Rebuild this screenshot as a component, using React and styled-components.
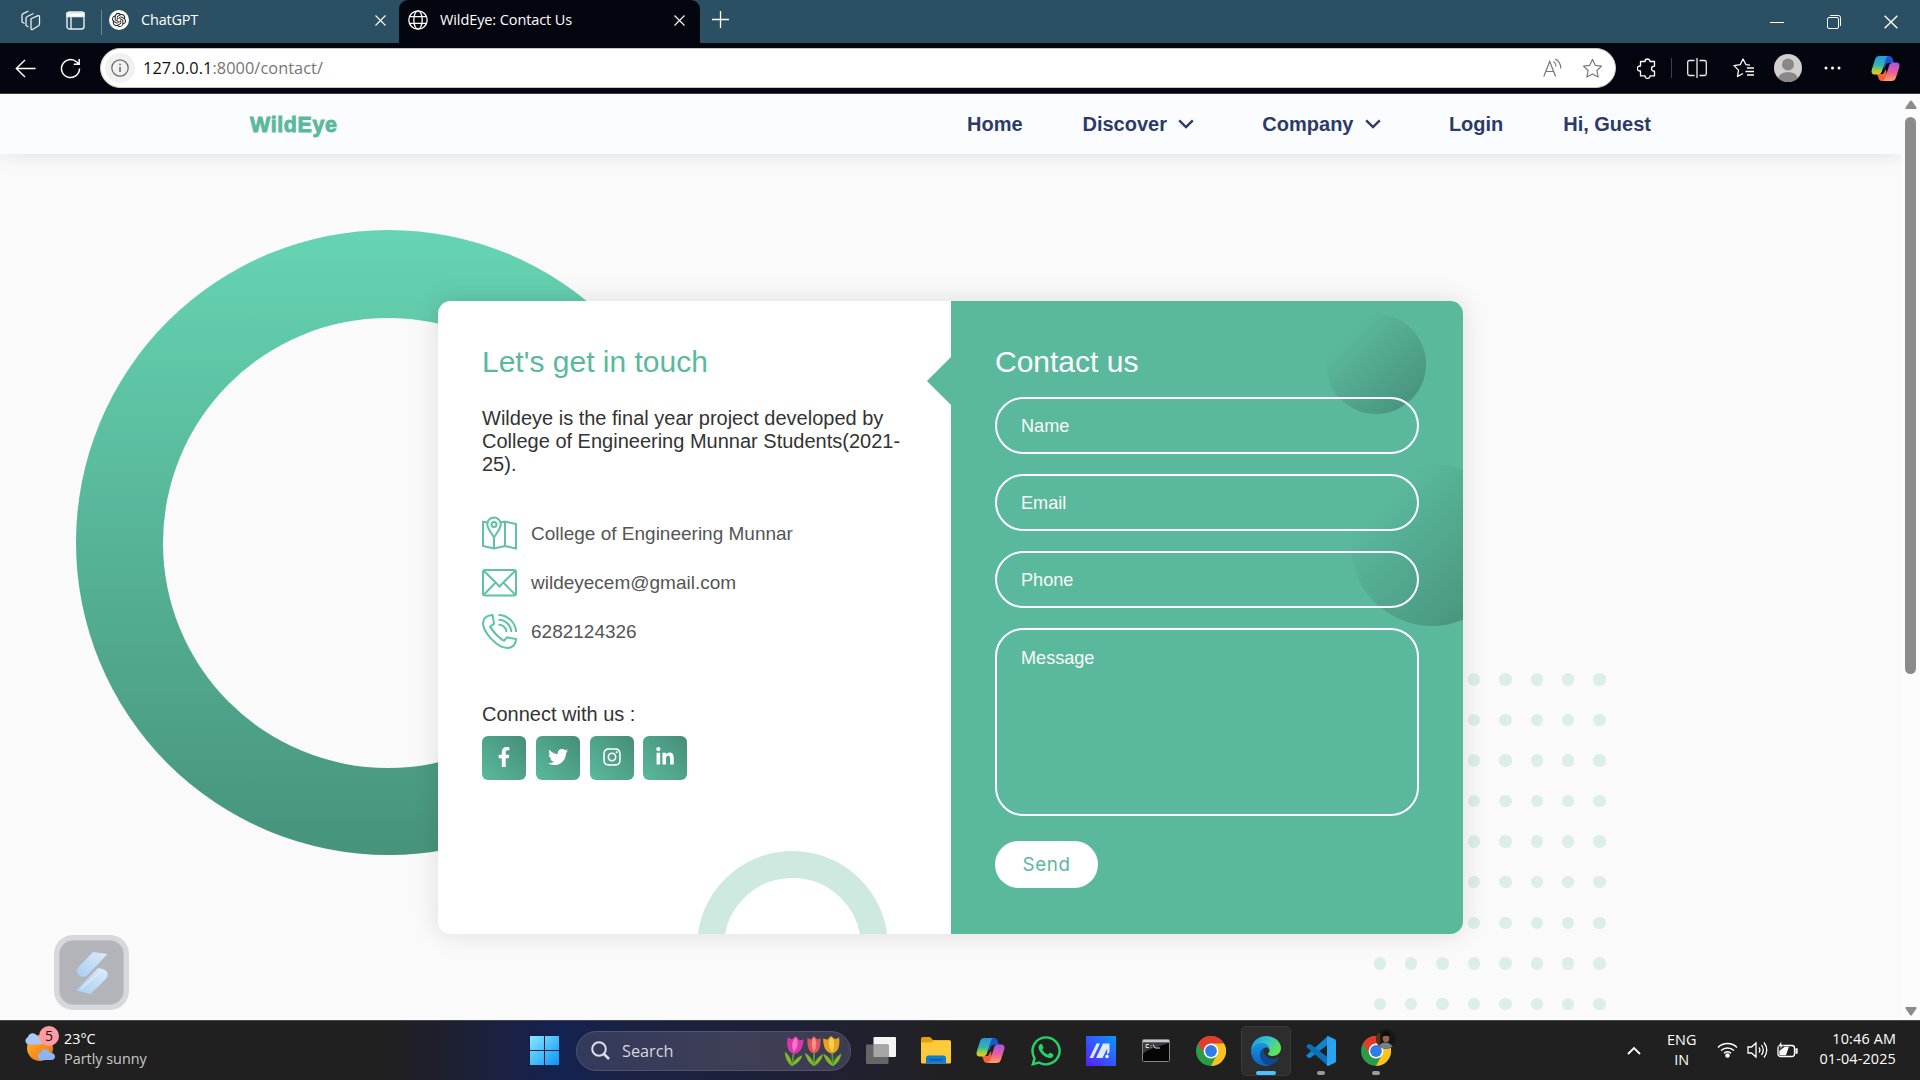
import React from "react";
import styled, { createGlobalStyle, css } from "styled-components";
import { FaFacebookF, FaTwitter, FaInstagram, FaLinkedinIn, FaWhatsapp } from "react-icons/fa";
import { SiOpenai } from "react-icons/si";

const green = "#5ab99d";
const uiFont = `"Open Sans", "Noto Sans", sans-serif`;
const pageFont = `"Liberation Sans", Arial, sans-serif`;

const GlobalStyle = createGlobalStyle`
  * { box-sizing: border-box; }
  html, body { margin: 0; padding: 0; background: #fafafa; }
  body { overflow: hidden; }
  h3, p { margin: 0; font-weight: 400; }
`;

const Screen = styled.div`
  width: 1920px;
  height: 1080px;
  display: flex;
  flex-direction: column;
  overflow: hidden;
`;

/* ---------- browser chrome ---------- */
const TabStrip = styled.div`
  height: 43px;
  flex: none;
  display: flex;
  align-items: stretch;
  background: #2b5063;
  color: #fff;
  font: 14.5px ${uiFont};
`;
const StripTools = styled.div`
  width: 101px;
  display: flex;
  align-items: center;
  padding: 0 0 2px 20px;
  gap: 24px;
  svg { display: block; }
`;
const StripDivider = styled.div`
  width: 1px;
  height: 25px;
  margin-top: 10px;
  background: #6b8694;
`;
const Tab = styled.div`
  display: flex;
  align-items: center;
  width: ${(p) => p.$w}px;
  padding: 0 ${(p) => p.$end}px 3px ${(p) => p.$pad}px;
  gap: 12px;
  ${(p) => p.$active && css`background: #03050f; border-radius: 9px 9px 0 0;`}
  svg { display: block; flex: none; }
`;
const TabTitle = styled.span`
  flex: 1;
  margin-top: -1px;
  white-space: nowrap;
  letter-spacing: ${(p) => p.$ls || 0}px;
`;
const Favicon = styled.span`
  width: 20px;
  height: 20px;
  border-radius: 50%;
  background: #fff;
  display: flex;
  align-items: center;
  justify-content: center;
  color: #111;
`;
const NewTab = styled.div`
  padding: 11px 0 0 12px;
  flex: 1;
`;
const WindowButtons = styled.div`
  display: flex;
  align-items: center;
  gap: 43px;
  padding-right: 22px;
`;
const Toolbar = styled.div`
  height: 51px;
  flex: none;
  display: flex;
  align-items: center;
  background: #03050f;
  border-bottom: 1px solid #3a3b42;
  color: #f3f3f3;
  svg { display: block; flex: none; }
`;
const ToolIcon = styled.div`
  width: ${(p) => p.$w}px;
  display: flex;
  justify-content: center;
`;
const AddressBar = styled.div`
  width: 1516px;
  height: 40px;
  border-radius: 20px;
  background: #fff;
  border: 1px solid #c9c4cc;
  display: flex;
  align-items: center;
  padding: 0 12px 0 4px;
  color: #757575;
  font: 16.3px ${uiFont};
`;
const InfoBadge = styled.div`
  width: 30px;
  height: 30px;
  border-radius: 50%;
  background: #f1f1f1;
  display: flex;
  align-items: center;
  justify-content: center;
  margin-right: 8px;
`;
const Url = styled.div`
  flex: 1;
  letter-spacing: 0.08px;
  b { font-weight: 400; color: #111; }
`;
const BarDivider = styled.div`
  width: 1px;
  height: 20px;
  background: #3d3f48;
`;

/* ---------- web page ---------- */
const Viewport = styled.div`
  height: 926px;
  flex: none;
  display: flex;
`;
const Page = styled.div`
  position: relative;
  width: 1901px;
  background: #fafafa;
  overflow: hidden;
  font-family: ${pageFont};
`;
const Nav = styled.nav`
  position: relative;
  z-index: 2;
  height: 60px;
  padding: 0 250px;
  background: #fbfcff;
  box-shadow: 0 0 19px rgba(8, 36, 60, 0.12);
  display: flex;
  align-items: center;
  justify-content: space-between;
`;
const Brand = styled.div`
  color: ${green};
  font-size: 21.4px;
  font-weight: 700;
  letter-spacing: 0.65px;
  padding-top: 2px;
  -webkit-text-stroke: 0.9px ${green};
`;
const NavLinks = styled.div`
  display: flex;
  gap: 59.9px;
`;
const NavLink = styled.div`
  display: flex;
  align-items: center;
  color: #2b3a67;
  font-size: 20px;
  font-weight: 700;
  svg { margin: 0 8px 0 11.5px; }
`;
const Main = styled.main`
  display: flex;
  padding: 147px 0 0 438px;
`;
const BigRing = styled.div`
  position: absolute;
  left: 75.6px;
  top: 136.2px;
  width: 625px;
  height: 625px;
  border-radius: 50%;
  background: linear-gradient(to bottom, #66d4b4, #47937d);
  display: flex;
  align-items: center;
  justify-content: center;
  &::after {
    content: "";
    width: 450px;
    height: 450px;
    border-radius: 50%;
    background: #fafafa;
  }
`;
const Dots = styled.div`
  position: absolute;
  left: 1373.6px;
  top: 579px;
  display: grid;
  grid-template-columns: repeat(8, 12.5px);
  column-gap: 18.9px;
  row-gap: 28.1px;
`;
const Dot = styled.i`
  width: 12.5px;
  height: 12.5px;
  border-radius: 50%;
  background: #dbeee7;
`;
const Card = styled.section`
  position: relative;
  width: 1025px;
  height: 633px;
  display: grid;
  grid-template-columns: 513px 512px;
  background: #fff;
  border-radius: 12.5px;
  box-shadow: 0 0 25px 1.25px rgba(0, 0, 0, 0.1);
  overflow: hidden;
`;
const InfoPane = styled.div`
  position: relative;
  padding: 46px 44px;
`;
const SmallRing = styled.div`
  position: absolute;
  left: 259px;
  top: 550px;
  width: 191px;
  height: 191px;
  border: 27.5px solid #cde9e0;
  border-radius: 50%;
`;
const Heading = styled.h3`
  font-size: 30px;
  line-height: 30px;
  color: ${(p) => p.$color};
  margin-bottom: ${(p) => p.$gap}px;
`;
const Intro = styled.p`
  font-size: 20px;
  line-height: 23px;
  color: #333;
  margin-bottom: 40px;
`;
const InfoRow = styled.div`
  display: flex;
  align-items: center;
  gap: 14px;
  height: 35px;
  margin-bottom: 14px;
  color: #555;
  font-size: 19px;
  svg { display: block; }
`;
const SocialLabel = styled.p`
  margin-top: 54px;
  font-size: 20px;
  line-height: 23px;
  color: #333;
`;
const SocialRow = styled.div`
  display: flex;
  gap: 9.8px;
  margin-top: 10px;
`;
const SocialIcon = styled.div`
  width: 44px;
  height: 44px;
  border-radius: 6px;
  background: linear-gradient(45deg, ${green}, #458d78);
  color: #fff;
  font-size: 20px;
  display: flex;
  align-items: center;
  justify-content: center;
  padding-bottom: 2px;
`;
const FormPane = styled.div`
  position: relative;
  background: ${green};
  padding: 46px 44px;
  &::before {
    content: "";
    position: absolute;
    left: -17px;
    top: 62.5px;
    width: 34px;
    height: 34px;
    background: ${green};
    transform: rotate(45deg);
  }
`;
const Bubble = styled.div`
  position: absolute;
  top: ${(p) => p.$top}px;
  right: ${(p) => p.$right}px;
  width: ${(p) => p.$size}px;
  height: ${(p) => p.$size}px;
  border-radius: 50%;
  background: linear-gradient(135deg, transparent 20%, #458d78);
`;
const Form = styled.form`
  position: relative;
  display: flex;
  flex-direction: column;
  align-items: flex-start;
`;
const field = css`
  display: block;
  width: 424px;
  margin: 0 0 20px;
  padding: 2px 24px 0;
  border: 2px solid #fff;
  border-radius: 28.5px;
  background: none;
  outline: none;
  resize: none;
  color: #fff;
  font: 18.1px ${pageFont};
  &::placeholder { color: #fafafa; opacity: 1; }
`;
const Input = styled.input`
  ${field}
  height: 57px;
`;
const Textarea = styled.textarea`
  ${field}
  height: 188px;
  padding-top: 18px;
  margin-bottom: 25px;
`;
const Send = styled.button`
  width: 103px;
  height: 47px;
  padding: 0;
  border: 0;
  border-radius: 23.5px;
  background: #fff;
  color: ${green};
  font: 18.8px Inter, sans-serif;
  letter-spacing: 0.6px;
`;
const Widget = styled.div`
  position: absolute;
  left: 54px;
  top: 841px;
  width: 75px;
  height: 75px;
  border-radius: 19px;
  background: #d7d8dc;
  padding: 5px;
`;
const WidgetFace = styled.div`
  width: 65px;
  height: 65px;
  border-radius: 14px;
  background: #b3b4b9;
  border: 1px solid #c1c2c7;
  display: flex;
  align-items: center;
  justify-content: center;
`;
const Scrollbar = styled.div`
  width: 19px;
  background: #fcfcfd;
  display: flex;
  flex-direction: column;
  align-items: center;
  padding: 6px 0 4px 0;
  svg { display: block; flex: none; }
`;
const ThumbTrack = styled.div`
  flex: 1;
  padding-top: 8px;
`;
const Thumb = styled.div`
  width: 11px;
  height: 557px;
  border-radius: 6px;
  background: #8b8b8b;
`;

/* ---------- taskbar ---------- */
const Taskbar = styled.div`
  height: 60px;
  flex: none;
  display: flex;
  align-items: center;
  border-top: 1px solid #45484a;
  background: linear-gradient(90deg, #202020 0 380px, #1f1f2b 430px, #1b2140 500px, #142251 560px, #1b2141 640px, #1e2038 780px, #202130 850px, #212126 920px, #202020 980px);
  color: #fff;
  font: 14.4px/20px ${uiFont};
  svg { display: block; flex: none; }
`;
const Weather = styled.div`
  width: 517px;
  padding-left: 24px;
  display: flex;
  gap: 8px;
`;
const WeatherIcon = styled.div`
  position: relative;
  width: 32px;
  height: 40px;
`;
const Badge = styled.span`
  position: absolute;
  left: 15px;
  top: -3px;
  width: 20px;
  height: 20px;
  border-radius: 50%;
  background: #ff99a4;
  color: #111;
  font-size: 14px;
  text-align: center;
`;
const Stack = styled.div`
  display: flex;
  flex-direction: column;
  text-align: ${(p) => p.$align || "left"};
  white-space: nowrap;
  letter-spacing: ${(p) => p.$ls || 0}px;
  margin-bottom: ${(p) => p.$lift || 0}px;
`;
const Muted = styled.span`
  color: #c9c9c9;
`;
const Slot = styled.div`
  width: 55px;
  height: 50px;
  position: relative;
  display: flex;
  align-items: center;
  justify-content: center;
`;
const ActiveTile = styled.div`
  width: 50px;
  height: 50px;
  border-radius: 5px;
  background: #2d2d2d;
  border: 1px solid #393939;
  display: flex;
  align-items: center;
  justify-content: center;
`;
const Underline = styled.span`
  position: absolute;
  bottom: 1px;
  left: 50%;
  transform: translateX(-50%);
  width: ${(p) => p.$w}px;
  height: 4px;
  border-radius: 2px;
  background: ${(p) => p.$c};
`;
const SearchBox = styled.div`
  width: 275px;
  height: 40px;
  margin: 0 2px 0 4px;
  border-radius: 20px;
  background: linear-gradient(90deg, #343a5c, #3e3f56 60%, #3c3d50);
  border: 1px solid #50546e;
  display: flex;
  align-items: center;
  padding: 0 8px 0 14px;
  color: #d5d6df;
  font-size: 16.3px;
`;
const SearchText = styled.span`
  flex: 1;
  padding: 0 0 0 12px;
`;
const Photo = styled.span`
  position: absolute;
  left: 28px;
  top: 3px;
  width: 20px;
  height: 20px;
  border-radius: 50%;
  overflow: hidden;
`;
const Tray = styled.div`
  flex: 1;
  display: flex;
  justify-content: flex-end;
  align-items: center;
  padding-right: 24px;
`;
const TrayIcons = styled.div`
  display: flex;
  gap: 9px;
  margin: 0 21px 2px 21px;
  width: 81px;
`;

const Cross = ({ s = 11 }) => (
  <svg width={s} height={s} viewBox="0 0 11 11" stroke="#fff" strokeWidth="1.1"><path d="M.5.5l10 10M10.5.5l-10 10" /></svg>
);
const Chevron = () => (
  <svg width="16" height="10" viewBox="0 0 16 10" fill="none" stroke="#2b3a67" strokeWidth="2.4"><path d="M1.2 1.3L8 8l6.8-6.7" /></svg>
);
const MapIcon = () => (
  <svg width="35" height="35" viewBox="0 0 35 35" fill="none" stroke="#5fc2a5" strokeWidth="2">
    <path d="M5.3 6.6L1 5.7V30l11 2.5 11-2.5 11 2.5V8L23 5.6l-4.5.9M12 21v11.5M23 5.6V30" />
    <path d="M12 21.5C9 16.5 5.3 12.500 5.300 8.200a6.700 6.700 0 0 1 13.400 0C18.700 12.500 15 16.500 12 21.500z" />
    <circle cx="12" cy="8.500" r="2.500" />
  </svg>
);
const MailIcon = () => (
  <svg width="35" height="35" viewBox="0 0 35 35" fill="none" stroke="#5fc2a5" strokeWidth="2">
    <rect x="1" y="5" width="33" height="25.500" rx="2" />
    <path d="M2 6l11.700 11.500 3.800 4 3.800-4L33 6M2 29.500l11.700-12M33 29.500l-11.700-12" />
  </svg>
);
const PhoneIcon = () => (
  <svg width="35" height="35" viewBox="0 0 35 35" fill="none" stroke="#5fc2a5" strokeWidth="2">
    <path d="M10.500 1C5 1 1 4.500 1 9c0 9 14 25 24.500 25 5 0 8.500-3.500 8.500-9l-9-1.700-3 3.400c-4-2-12-10-13.800-14.200L12 9.700z" />
    <path d="M16.500 1C26 1 34 9 34 18M16.500 5.700C23.500 5.700 29.300 11.500 29.300 18M16.500 10.400c4.300 0 7.900 3.500 7.900 7.600" />
  </svg>
);
const Copilot = ({ id }) => (
  <svg width="29" height="27" viewBox="0 0 29 27">
    <defs>
      <linearGradient id={id + "a"} x1="0" y1="0" x2="0" y2="1"><stop offset="0" stopColor="#2795e8" /><stop offset=".5" stopColor="#35b6a8" /><stop offset=".8" stopColor="#a9cf3f" /><stop offset="1" stopColor="#f5c518" /></linearGradient>
      <linearGradient id={id + "b"} x1="0" y1="0" x2="0" y2="1"><stop offset="0" stopColor="#a855e8" /><stop offset=".5" stopColor="#e85a9c" /><stop offset="1" stopColor="#ffa05c" /></linearGradient>
    </defs>
    <path d="M8 1h10c2.500 0 3.200 1.500 3.800 3.500L23 8h-5c-2 0-3 1-3.700 3L13 14z" fill="#1c55c8" />
    <path d="M6 19h6l3-5 1 8-3 4h-2c-2.300 0-3-1.500-3.500-3z" fill="#f2603c" />
    <path d="M8.500 1H18c-2 0-2.800 1.700-3.400 3.800l-3.500 11C10.400 18.300 9 19.500 6.500 19.500H4c-3 0-4-2-3.200-5L4 4.500C4.800 2 6 1 8.500 1z" fill={`url(#${id}a)`} />
    <path d="M20.500 26H11c2 0 2.800-1.700 3.400-3.800l3.500-11c.7-2.500 2.100-3.700 4.600-3.700H25c3 0 4 2 3.200 5L25 22.500c-.8 2.500-2 3.500-4.500 3.500z" fill={`url(#${id}b)`} />
  </svg>
);
const Chrome = () => (
  <svg width="30" height="30" viewBox="0 0 30 30">
    <circle cx="15" cy="15" r="15" fill="#2a9c48" />
    <path d="M2 7.500A15 15 0 0 1 28 7.500L15 8.500 9 19z" fill="#e33b2e" />
    <path d="M28 7.500A15 15 0 0 1 15 30l6-11.500L15 7.500z" fill="#fcc31e" />
    <circle cx="15" cy="15" r="7.400" fill="#fff" /><circle cx="15" cy="15" r="5.900" fill="#2f7de9" />
  </svg>
);
const Edge = () => (
  <svg width="30" height="30" viewBox="0 0 30 30">
    <defs>
      <linearGradient id="edgeTop" x1="0" y1="0" x2="1" y2=".5"><stop offset="0" stopColor="#1b93de" /><stop offset=".5" stopColor="#35c1d0" /><stop offset="1" stopColor="#62e356" /></linearGradient>
      <linearGradient id="edgeSide" x1="0" y1="0" x2="0" y2="1"><stop offset="0" stopColor="#1993dc" /><stop offset="1" stopColor="#1062bb" /></linearGradient>
    </defs>
    <path d="M0 14C1 5.500 7 0 15 0c8.500 0 15 5.500 15 12 0 4.800-3.800 8-8.500 8-3 0-4.800-1-4.500-2.200.2-.8 1.500-1.300 1.500-3.600C18.500 11 15 8.500 11 8.500 6 8.500 2 11 0 14z" fill="url(#edgeTop)" />
    <path d="M0 15c1-4.500 5.500-8 10.500-8 5 0 8 3 8 7-1.200-2.200-3-3-5-2-3 1.500-4.500 5-3 9 1.500 4.500 5.500 7.500 9.500 7.500-1.500.8-3.500 1.500-5 1.500C6.500 30 0 23.500 0 15z" fill="url(#edgeSide)" />
    <path d="M13.500 12c-4 1.500-5.500 5.500-4 10 1.500 5 6.500 8 11 6.500 3-1 5.500-3 7-5.500.5-.9-.3-1.300-1-.9-3 1.400-7 1.200-9.800-.6-3.700-2.300-4.700-6.300-3.200-9.500z" fill="#0c4a93" />
  </svg>
);
const Tulip = ({ x, tilt, w, light, dark }) => (
  <g transform={`translate(${x} 0) rotate(${tilt} 8 30)`}>
    <path d="M8 15v16" stroke="#4c9a2a" strokeWidth="2" />
    <path d="M8 31C3 29 0 23-1 18c4 2 8 6 9 13zM8 31c4-2 8-6 9-12-5 3-8 6-9 12z" fill="#7fb52f" />
    <g transform={`translate(8 0) scale(${w} 1) translate(-8 0)`}>
      <path d="M0 3l4 1.500L8 1l4 3.500L16 3c.5 7-1 14.500-8 15.500C1 17.500-.5 10 0 3z" fill={dark} />
      <path d="M8 2c3.500 3.500 3.500 10 0 15C4.500 12 4.500 5.500 8 2z" fill={light} />
    </g>
  </g>
);
const stripPaths = "M4 13.500L1.500 12V5.500C1.500 4.500 2 4 2.700 3.600L8 1M8 17l-2.500-1.500V8.500c0-1 .5-1.600 1.300-2L13 3.500M11 8.500l6.500-2.800c1-.4 1.500 0 1.500 1V14c0 1-.5 1.600-1.300 2L12 19.500c-1 .5-1.500 0-1.500-1V9.500c0-.6.1-.8.5-1z";

const navItems = [["Home"], ["Discover", true], ["Company", true], ["Login"], ["Hi, Guest"]];
const contactRows = [
  [MapIcon, "College of Engineering Munnar"],
  [MailIcon, "wildeyecem@gmail.com"],
  [PhoneIcon, "6282124326"],
];
const socials = [FaFacebookF, FaTwitter, FaInstagram, FaLinkedinIn];

function BrowserTop() {
  return (
    <>
      <TabStrip>
        <StripTools>
          <svg width="22" height="21" viewBox="0 0 21 21" fill="none" stroke="#e9eff2" strokeWidth="1.300" strokeLinejoin="round"><path d={stripPaths} /></svg>
          <svg width="19" height="19" viewBox="0 0 19 19" fill="none" stroke="#e8eef1" strokeWidth="1.400"><rect x="1" y="1" width="17" height="17" rx="2.500" /><path d="M1 2h17v3.500H1z" fill="#fff" /><path d="M5 5v13" /></svg>
        </StripTools>
        <StripDivider />
        <Tab $w={297} $pad={7} $end={13}>
          <Favicon><SiOpenai size={14} /></Favicon>
          <TabTitle $ls={-0.2}>ChatGPT</TabTitle>
          <Cross />
        </Tab>
        <Tab $w={301} $pad={9} $end={15} $active>
          <svg width="20" height="20" viewBox="0 0 20 20" fill="none" stroke="#fff" strokeWidth="1.300"><circle cx="10" cy="10" r="9.200" /><ellipse cx="10" cy="10" rx="4.200" ry="9.200" /><path d="M1.500 6.700h17M1.500 13.300h17" /></svg>
          <TabTitle $ls={-0.1}>WildEye: Contact Us</TabTitle>
          <Cross />
        </Tab>
        <NewTab><svg width="17" height="17" viewBox="0 0 17 17" stroke="#fff" strokeWidth="1.300"><path d="M8.500 0v17M0 8.500h17" /></svg></NewTab>
        <WindowButtons>
          <svg width="14" height="14" stroke="#fff"><path d="M0 7.500h14" /></svg>
          <svg width="14" height="14" fill="none" stroke="#fff"><rect x=".5" y="2.500" width="11" height="11" rx="1.500" /><path d="M3 .5h8.500a2 2 0 0 1 2 2V11" /></svg>
          <Cross s={14} />
        </WindowButtons>
      </TabStrip>
      <Toolbar>
        <ToolIcon $w={50}><svg width="21" height="19" viewBox="0 0 21 19" fill="none" stroke="#fff" strokeWidth="1.400"><path d="M20.500 9.500H1.500M10 1L1.300 9.500 10 18" /></svg></ToolIcon>
        <ToolIcon $w={40}><svg width="21" height="21" viewBox="0 0 21 21" fill="none" stroke="#fff" strokeWidth="1.500"><path d="M19.500 10.500a9 9 0 1 1-3-6.700l2.500 2.400M19.200 1v5.300h-5.500" /></svg></ToolIcon>
        <ToolIcon $w={10} />
        <AddressBar>
          <InfoBadge><svg width="18" height="18" viewBox="0 0 18 18" fill="none" stroke="#666" strokeWidth="1.200"><circle cx="9" cy="9" r="8.200" /><path d="M9 8v5M9 4.800v1.500" strokeWidth="1.500" /></svg></InfoBadge>
          <Url><b>127.0.0.1</b>:8000/contact/</Url>
          <svg width="20" height="20" viewBox="0 0 20 20" fill="none" stroke="#777" strokeWidth="1.200"><path d="M.8 18.500L6.700 3.500l5.900 15M3 13.500h7.500M10.500 3.500c1.500 1 2.500 2.500 2.500 5M12 1c3.500 1.500 5.800 5 5.800 9.500" /></svg>
          <ToolIcon $w={19} />
          <svg width="21" height="21" viewBox="0 0 21 21" fill="none" stroke="#777" strokeWidth="1.200" strokeLinejoin="round"><path d="M10.500 1.500l2.800 5.800 6.200.8-4.600 4.400 1.200 6.500-5.600-3.100L4.900 19l1.200-6.500L1.500 8.100l6.200-.8z" /></svg>
        </AddressBar>
        <ToolIcon $w={6} />
        <ToolIcon $w={49}><svg width="20" height="21" viewBox="0 0 20 21" fill="none" stroke="#fff" strokeWidth="1.300" strokeLinejoin="round"><path d="M3.500 3.500H8a2.500 2.500 0 1 1 5 0h4.500v4.700c-4 0-4 5 0 5v4.700H13a2.500 2.500 0 1 1-5 0H3.500v-5a2.500 2.500 0 1 1 0-4.800z" /></svg></ToolIcon>
        <BarDivider />
        <ToolIcon $w={50}><svg width="20" height="20" viewBox="0 0 20 20" fill="none" stroke="#eee" strokeWidth="1.300"><path d="M7.500 2.500h-5a1.800 1.800 0 0 0-1.800 1.800v11.400a1.800 1.800 0 0 0 1.800 1.800h5M12.500 2.500h5a1.800 1.800 0 0 1 1.800 1.800v11.400a1.800 1.800 0 0 1-1.800 1.800h-5M10 0v20" /></svg></ToolIcon>
        <ToolIcon $w={42}><svg width="21" height="20" viewBox="0 0 21 20" fill="none" stroke="#fff" strokeWidth="1.300" strokeLinejoin="round"><path d="M17 7.200l-4-.5L10 1 7.200 6.700 1 7.600l4.500 4.500-1 6.400 5.500-3M14 10h7M12.500 13.500H21M14 17h7" /></svg></ToolIcon>
        <ToolIcon $w={47}><svg width="28" height="28" viewBox="0 0 28 28"><clipPath id="person"><circle cx="14" cy="14" r="14" /></clipPath><circle cx="14" cy="14" r="14" fill="#d2d0ce" /><g clipPath="url(#person)" fill="#8a8886"><circle cx="14" cy="10.500" r="6" /><ellipse cx="14" cy="25" rx="10" ry="7" /></g></svg></ToolIcon>
        <ToolIcon $w={43}><svg width="17" height="4" fill="#fff"><circle cx="2" cy="2" r="1.500" /><circle cx="8.500" cy="2" r="1.500" /><circle cx="15" cy="2" r="1.500" /></svg></ToolIcon>
        <ToolIcon $w={62}><Copilot id="cpTop" /></ToolIcon>
      </Toolbar>
    </>
  );
}

function ContactPage() {
  return (
    <Viewport>
      <Page>
        <BigRing />
        <Dots>{Array.from({ length: 72 }, (_, i) => <Dot key={i} />)}</Dots>
        <Nav>
          <Brand>WildEye</Brand>
          <NavLinks>
            {navItems.map(([label, menu]) => <NavLink key={label}>{label}{menu && <Chevron />}</NavLink>)}
          </NavLinks>
        </Nav>
        <Main>
          <Card>
            <InfoPane>
              <SmallRing />
              <Heading $color={green} $gap={30}>Let's get in touch</Heading>
              <Intro>Wildeye is the final year project developed by College of Engineering Munnar Students(2021-25).</Intro>
              {contactRows.map(([Icon, text]) => <InfoRow key={text}><Icon />{text}</InfoRow>)}
              <SocialLabel>Connect with us :</SocialLabel>
              <SocialRow>{socials.map((Icon, i) => <SocialIcon key={i}><Icon /></SocialIcon>)}</SocialRow>
            </InfoPane>
            <FormPane>
              <Bubble $top={162.5} $right={-50} $size={162.5} />
              <Bubble $top={13} $right={37} $size={100} />
              <Form>
                <Heading $color="#fff" $gap={20}>Contact us</Heading>
                <Input placeholder="Name" />
                <Input placeholder="Email" />
                <Input placeholder="Phone" />
                <Textarea placeholder="Message" />
                <Send type="button">Send</Send>
              </Form>
            </FormPane>
          </Card>
        </Main>
        <Widget>
          <WidgetFace>
            <svg width="32" height="42" viewBox="0 0 32 42">
              <defs><linearGradient id="blade" x1="0" y1="1" x2="1" y2="0"><stop offset="0" stopColor="#a9cdf3" /><stop offset="1" stopColor="#dcebf8" /></linearGradient></defs>
              <path d="M17 0l14.500 2L11.500 23c-2 2-5 2.200-7.500.8C.5 21.500 0 17.500 3 14.500z" fill="url(#blade)" />
              <path d="M0 38.500L22 16c4 .8 7 1.500 8.800 3.300 1.500 2.500 1 5.500-1.300 8L14.500 42z" fill="url(#blade)" />
              <path d="M5 37L27 17.500" stroke="#e5f0fa" strokeWidth="1.500" opacity=".7" />
            </svg>
          </WidgetFace>
        </Widget>
      </Page>
      <Scrollbar>
        <svg width="12" height="9" fill="#8b8b8b"><path d="M6 .500Q6.700.500 7 1l4.500 6.500Q12 9 11 9H1Q0 9 .500 7.500L5 1q.300-.500 1-.500z" /></svg>
        <ThumbTrack><Thumb /></ThumbTrack>
        <svg width="12" height="10" fill="#8b8b8b"><path d="M6 9.500Q6.700 9.500 7 9l4.500-6.500Q12 1 11 1H1Q0 1 .500 2.500L5 9q.300.500 1 .500z" /></svg>
      </Scrollbar>
    </Viewport>
  );
}

function WindowsTaskbar() {
  return (
    <Taskbar>
      <Weather>
        <WeatherIcon>
          <svg width="32" height="40" viewBox="0 0 32 40">
            <defs><linearGradient id="sun" x1="0" y1="0" x2="1" y2="1"><stop offset="0" stopColor="#ffb92e" /><stop offset="1" stopColor="#ef6a10" /></linearGradient></defs>
            <circle cx="16" cy="19" r="13" fill="url(#sun)" />
            <path d="M4 15.500a4 4 0 0 1 0-7.500c1-5 8-5 9.500 0 3 0 5 2 5 4s-1 3.500-3 3.500z" fill="#a9c8f7" />
            <path d="M16.500 31a3.700 3.700 0 0 1 .5-7.300c1-4.500 7.500-4.500 8.700 0 3.300 0 5.300 1.500 5.300 3.800 0 2-1.500 3.500-3.500 3.500z" fill="#8db4f5" />
          </svg>
          <Badge>5</Badge>
        </WeatherIcon>
        <Stack $lift={3}><span>23°C</span><Muted>Partly sunny</Muted></Stack>
      </Weather>
      <Slot>
        <svg width="29" height="29" viewBox="0 0 29 29"><defs><linearGradient id="win" gradientUnits="userSpaceOnUse" x1="0" y1="0" x2="29" y2="29"><stop offset="0" stopColor="#86eaff" /><stop offset="1" stopColor="#0c93f5" /></linearGradient></defs><path fill="url(#win)" d="M0 0h14v14H0zM15 0h14v14H15zM0 15h14v14H0zM15 15h14v14H15z" /></svg>
      </Slot>
      <SearchBox>
        <svg width="19" height="19" viewBox="0 0 19 19" fill="none" stroke="#dfe0e8" strokeWidth="2"><circle cx="8" cy="8" r="6.800" /><path d="M13 13l5 5" strokeWidth="2.500" /></svg>
        <SearchText>Search</SearchText>
        <svg width="60" height="32" viewBox="0 0 60 32">
          <Tulip x={2} tilt={8} w={1} light="#ff6fd0" dark="#d23aa8" />
          <Tulip x={24} tilt={0} w={0.82} light="#ff8f86" dark="#dc5560" />
          <Tulip x={43} tilt={-4} w={1} light="#ffcf55" dark="#e9a41f" />
        </svg>
      </SearchBox>
      <Slot><svg width="30" height="27"><rect x="7.500" y="0" width="22.500" height="20" rx="1" fill="#f4f4f4" /><rect x="0" y="7.500" width="22.500" height="19.500" rx="1" fill="#666" /><rect x="7.500" y="7.500" width="15" height="12.500" fill="#a6a6a6" /></svg></Slot>
      <Slot><svg width="30" height="27"><path d="M0 2Q0 0 2 0h7l3 3h16q2 0 2 2v5H0z" fill="#e6a107" /><path d="M0 5.500h10L13 3.500h15.500q1.500 0 1.500 1.500v20q0 1.500-1.500 1.500h-27Q0 26.500 0 25z" fill="#ffca3a" /><path d="M5 26.500V21q0-2.500 2.500-2.500h15Q25 18.500 25 21v5.500z" fill="#0f7bd2" /><path d="M8.500 22.700h13" stroke="#0a559b" strokeWidth="1.300" /></svg></Slot>
      <Slot><Copilot id="cpTask" /></Slot>
      <Slot><FaWhatsapp size={34} color="#25d366" /></Slot>
      <Slot><svg width="30" height="30"><defs><linearGradient id="mm" x1="0" y1="1" x2="1" y2="0"><stop offset="0" stopColor="#5a1cf8" /><stop offset="1" stopColor="#0a98ff" /></linearGradient></defs><path fill="url(#mm)" d="M0 0h30v30H0z" /><path d="M3.500 22L10.500 7.500h3.500L7 22zM10 22l7-14.500h6.500V16l-2.300 3V12.500L16.500 22H13l4-8.500L13.500 22z" fill="#dfe8ff" /><circle cx="21" cy="20.500" r="1.700" fill="#fff" /></svg></Slot>
      <Slot><svg width="28" height="23"><rect x=".5" y=".5" width="27" height="22" rx="1" fill="#050505" stroke="#82868c" /><path d="M1 1h26v2.500H1z" fill="#c6cbd1" /><path d="M1 4h26L12 9Q4 11 1 15z" fill="#3b3b3b" /><path d="M4 5.500h3M4 5.500v3h3M9 6v.8M9 8v.8M11 5.500l2 3.500h5" stroke="#ddd" fill="none" /></svg></Slot>
      <Slot><Chrome /></Slot>
      <Slot><ActiveTile><Edge /></ActiveTile><Underline $w={20} $c="#4cc2ff" /></Slot>
      <Slot>
        <svg width="30" height="30" viewBox="0 0 30 30"><path d="M22 0L0 19.500l2.200 2.300 2 .1L24 7z" fill="#1184cf" /><path d="M22 30L0 10.500l2.200-2.300 2-.1L24 23z" fill="#0e70b8" /><path d="M22 0l7 3.300q1 .5 1 1.700v20q0 1.200-1 1.700L22 30q-1 .2-1-1V1q0-1.200 1-1z" fill="#2ba3f0" /></svg>
        <Underline $w={8} $c="#9a9a9a" />
      </Slot>
      <Slot>
        <Chrome />
        <Photo><svg width="20" height="20"><path fill="#161a16" d="M0 0h20v20H0z" /><path d="M0 4h4v16H0z" fill="#603016" /><path d="M2 20q1-6 7-6.500Q16 14 18 20z" fill="#75808a" /><ellipse cx="10" cy="9" rx="3.300" ry="4.200" fill="#94654e" /><path d="M6 8q0-5.500 4-5.500T14 8q-4-2.500-8 0z" fill="#0e0c0b" /></svg></Photo>
        <Underline $w={8} $c="#9a9a9a" />
      </Slot>
      <Tray>
        <svg width="14" height="9" fill="none" stroke="#fff" strokeWidth="1.800"><path d="M1 8l6-6 6 6" /></svg>
        <ToolIcon $w={26} />
        <Stack $align="center" $lift={1}><span>ENG</span><span>IN</span></Stack>
        <TrayIcons>
          <svg width="21" height="17" viewBox="0 0 21 17" fill="none" stroke="#fff" strokeWidth="1.500"><path d="M1 6.500a13.500 13.500 0 0 1 19 0M4 9.500a9.500 9.500 0 0 1 13 0M7 12.300a5 5 0 0 1 7 0" /><circle cx="10.500" cy="14.500" r="1.500" fill="#fff" /></svg>
          <svg width="21" height="18" viewBox="0 0 21 18" fill="none" stroke="#fff" strokeWidth="1.300"><path d="M1 6h3.500L9 2v14l-4.500-4H1zM12 6.500q1.800 2.500 0 5M14.500 4q3.500 5 0 10M17 1.500q5.500 7.500 0 15" /></svg>
          <svg width="21" height="17" viewBox="0 0 21 17" fill="none" stroke="#fff" strokeWidth="1.300"><rect x="1" y="4.500" width="16.500" height="11" rx="2.500" /><path d="M18.500 8h1.500v4h-1.500" fill="#fff" /><path d="M3 13.500V10l5-3.500h3L8.500 13.500z" fill="#fff" /><path d="M4.500 0L1 5.500h2.500L2.500 9 7 3.500H4.500z" fill="#fff" stroke="#202020" strokeWidth=".5" /></svg>
        </TrayIcons>
        <Stack $align="right" $ls={0.15} $lift={3}><span>10:46 AM</span><span>01-04-2025</span></Stack>
      </Tray>
    </Taskbar>
  );
}

export default function App() {
  return (
    <Screen>
      <GlobalStyle />
      <BrowserTop />
      <ContactPage />
      <WindowsTaskbar />
    </Screen>
  );
}
